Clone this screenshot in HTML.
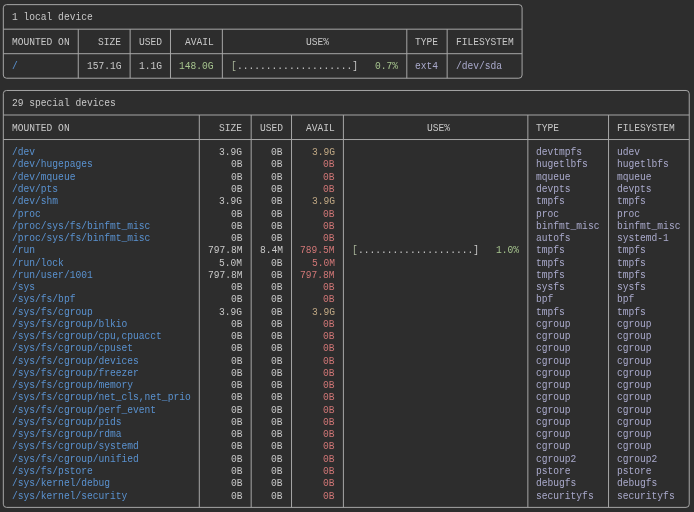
<!DOCTYPE html>
<html><head><meta charset="utf-8"><style>
html,body{margin:0;padding:0;background:#2d2d2d;}
body{width:694px;height:512px;position:relative;overflow:hidden;}
svg{position:absolute;left:0;top:0;}
#t{position:absolute;left:0;top:0;width:694px;height:512px;will-change:transform;}
span{position:absolute;white-space:pre;font-family:"Liberation Mono",monospace;font-size:10.0px;line-height:12.262px;transform:scaleX(0.9605);transform-origin:0 0;}
</style></head><body>
<svg width="694" height="512" viewBox="0 0 694 512" fill="#a6a6a6" stroke="#a6a6a6">
<rect x="3.32" y="4.64" width="518.76" height="73.57" rx="3.2" fill="none" stroke-width="1.0"/>
<rect x="3.32" y="28.67" width="518.76" height="1.0" stroke="none"/>
<rect x="3.32" y="53.19" width="518.76" height="1.0" stroke="none"/>
<rect x="77.75" y="29.17" width="1.0" height="49.05" stroke="none"/>
<rect x="129.63" y="29.17" width="1.0" height="49.05" stroke="none"/>
<rect x="169.98" y="29.17" width="1.0" height="49.05" stroke="none"/>
<rect x="221.85" y="29.17" width="1.0" height="49.05" stroke="none"/>
<rect x="406.30" y="29.17" width="1.0" height="49.05" stroke="none"/>
<rect x="446.65" y="29.17" width="1.0" height="49.05" stroke="none"/>
<rect x="3.32" y="90.48" width="685.92" height="416.91" rx="3.2" fill="none" stroke-width="1.0"/>
<rect x="3.32" y="114.50" width="685.92" height="1.0" stroke="none"/>
<rect x="3.32" y="139.02" width="685.92" height="1.0" stroke="none"/>
<rect x="198.80" y="115.00" width="1.0" height="392.38" stroke="none"/>
<rect x="250.67" y="115.00" width="1.0" height="392.38" stroke="none"/>
<rect x="291.02" y="115.00" width="1.0" height="392.38" stroke="none"/>
<rect x="342.90" y="115.00" width="1.0" height="392.38" stroke="none"/>
<rect x="527.35" y="115.00" width="1.0" height="392.38" stroke="none"/>
<rect x="608.04" y="115.00" width="1.0" height="392.38" stroke="none"/>
</svg>
<div id="t">
<span style="left:11.97px;top:12.00px;color:#c8c8c8">1 local device</span>
<span style="left:11.97px;top:37.00px;color:#c8c8c8">MOUNTED ON</span>
<span style="left:98.43px;top:37.00px;color:#c8c8c8">SIZE</span>
<span style="left:138.78px;top:37.00px;color:#c8c8c8">USED</span>
<span style="left:184.89px;top:37.00px;color:#c8c8c8">AVAIL</span>
<span style="left:305.93px;top:37.00px;color:#c8c8c8">USE%</span>
<span style="left:415.45px;top:37.00px;color:#c8c8c8">TYPE</span>
<span style="left:455.80px;top:37.00px;color:#c8c8c8">FILESYSTEM</span>
<span style="left:11.97px;top:61.00px;color:#5a92d0">/</span>
<span style="left:86.90px;top:61.00px;color:#c8c8c8">157.1G</span>
<span style="left:138.78px;top:61.00px;color:#c8c8c8">1.1G</span>
<span style="left:179.12px;top:61.00px;color:#a6c48e">148.0G</span>
<span style="left:231.00px;top:61.00px;color:#a8b498">[</span>
<span style="left:236.76px;top:61.00px;color:#c8c8c8">....................]</span>
<span style="left:375.10px;top:61.00px;color:#a6c48e">0.7%</span>
<span style="left:415.45px;top:61.00px;color:#aaaacc">ext4</span>
<span style="left:455.80px;top:61.00px;color:#aaaacc">/dev/sda</span>
<span style="left:11.97px;top:98.00px;color:#c8c8c8">29 special devices</span>
<span style="left:11.97px;top:123.00px;color:#c8c8c8">MOUNTED ON</span>
<span style="left:219.47px;top:123.00px;color:#c8c8c8">SIZE</span>
<span style="left:259.82px;top:123.00px;color:#c8c8c8">USED</span>
<span style="left:305.93px;top:123.00px;color:#c8c8c8">AVAIL</span>
<span style="left:426.98px;top:123.00px;color:#c8c8c8">USE%</span>
<span style="left:536.49px;top:123.00px;color:#c8c8c8">TYPE</span>
<span style="left:617.19px;top:123.00px;color:#c8c8c8">FILESYSTEM</span>
<span style="left:11.97px;top:147.00px;color:#5a92d0">/dev</span>
<span style="left:219.47px;top:147.00px;color:#c8c8c8">3.9G</span>
<span style="left:271.35px;top:147.00px;color:#c8c8c8">0B</span>
<span style="left:311.70px;top:147.00px;color:#c0a884">3.9G</span>
<span style="left:536.49px;top:147.00px;color:#aaaacc">devtmpfs</span>
<span style="left:617.19px;top:147.00px;color:#aaaacc">udev</span>
<span style="left:11.97px;top:159.00px;color:#5a92d0">/dev/hugepages</span>
<span style="left:231.00px;top:159.00px;color:#c8c8c8">0B</span>
<span style="left:271.35px;top:159.00px;color:#c8c8c8">0B</span>
<span style="left:323.22px;top:159.00px;color:#d07676">0B</span>
<span style="left:536.49px;top:159.00px;color:#aaaacc">hugetlbfs</span>
<span style="left:617.19px;top:159.00px;color:#aaaacc">hugetlbfs</span>
<span style="left:11.97px;top:172.00px;color:#5a92d0">/dev/mqueue</span>
<span style="left:231.00px;top:172.00px;color:#c8c8c8">0B</span>
<span style="left:271.35px;top:172.00px;color:#c8c8c8">0B</span>
<span style="left:323.22px;top:172.00px;color:#d07676">0B</span>
<span style="left:536.49px;top:172.00px;color:#aaaacc">mqueue</span>
<span style="left:617.19px;top:172.00px;color:#aaaacc">mqueue</span>
<span style="left:11.97px;top:184.00px;color:#5a92d0">/dev/pts</span>
<span style="left:231.00px;top:184.00px;color:#c8c8c8">0B</span>
<span style="left:271.35px;top:184.00px;color:#c8c8c8">0B</span>
<span style="left:323.22px;top:184.00px;color:#d07676">0B</span>
<span style="left:536.49px;top:184.00px;color:#aaaacc">devpts</span>
<span style="left:617.19px;top:184.00px;color:#aaaacc">devpts</span>
<span style="left:11.97px;top:196.00px;color:#5a92d0">/dev/shm</span>
<span style="left:219.47px;top:196.00px;color:#c8c8c8">3.9G</span>
<span style="left:271.35px;top:196.00px;color:#c8c8c8">0B</span>
<span style="left:311.70px;top:196.00px;color:#c0a884">3.9G</span>
<span style="left:536.49px;top:196.00px;color:#aaaacc">tmpfs</span>
<span style="left:617.19px;top:196.00px;color:#aaaacc">tmpfs</span>
<span style="left:11.97px;top:209.00px;color:#5a92d0">/proc</span>
<span style="left:231.00px;top:209.00px;color:#c8c8c8">0B</span>
<span style="left:271.35px;top:209.00px;color:#c8c8c8">0B</span>
<span style="left:323.22px;top:209.00px;color:#d07676">0B</span>
<span style="left:536.49px;top:209.00px;color:#aaaacc">proc</span>
<span style="left:617.19px;top:209.00px;color:#aaaacc">proc</span>
<span style="left:11.97px;top:221.00px;color:#5a92d0">/proc/sys/fs/binfmt_misc</span>
<span style="left:231.00px;top:221.00px;color:#c8c8c8">0B</span>
<span style="left:271.35px;top:221.00px;color:#c8c8c8">0B</span>
<span style="left:323.22px;top:221.00px;color:#d07676">0B</span>
<span style="left:536.49px;top:221.00px;color:#aaaacc">binfmt_misc</span>
<span style="left:617.19px;top:221.00px;color:#aaaacc">binfmt_misc</span>
<span style="left:11.97px;top:233.00px;color:#5a92d0">/proc/sys/fs/binfmt_misc</span>
<span style="left:231.00px;top:233.00px;color:#c8c8c8">0B</span>
<span style="left:271.35px;top:233.00px;color:#c8c8c8">0B</span>
<span style="left:323.22px;top:233.00px;color:#d07676">0B</span>
<span style="left:536.49px;top:233.00px;color:#aaaacc">autofs</span>
<span style="left:617.19px;top:233.00px;color:#aaaacc">systemd-1</span>
<span style="left:11.97px;top:245.00px;color:#5a92d0">/run</span>
<span style="left:207.94px;top:245.00px;color:#c8c8c8">797.8M</span>
<span style="left:259.82px;top:245.00px;color:#c8c8c8">8.4M</span>
<span style="left:300.17px;top:245.00px;color:#d07676">789.5M</span>
<span style="left:352.04px;top:245.00px;color:#a8b498">[</span>
<span style="left:357.81px;top:245.00px;color:#c8c8c8">....................]</span>
<span style="left:496.14px;top:245.00px;color:#a6c48e">1.0%</span>
<span style="left:536.49px;top:245.00px;color:#aaaacc">tmpfs</span>
<span style="left:617.19px;top:245.00px;color:#aaaacc">tmpfs</span>
<span style="left:11.97px;top:258.00px;color:#5a92d0">/run/lock</span>
<span style="left:219.47px;top:258.00px;color:#c8c8c8">5.0M</span>
<span style="left:271.35px;top:258.00px;color:#c8c8c8">0B</span>
<span style="left:311.70px;top:258.00px;color:#d07676">5.0M</span>
<span style="left:536.49px;top:258.00px;color:#aaaacc">tmpfs</span>
<span style="left:617.19px;top:258.00px;color:#aaaacc">tmpfs</span>
<span style="left:11.97px;top:270.00px;color:#5a92d0">/run/user/1001</span>
<span style="left:207.94px;top:270.00px;color:#c8c8c8">797.8M</span>
<span style="left:271.35px;top:270.00px;color:#c8c8c8">0B</span>
<span style="left:300.17px;top:270.00px;color:#d07676">797.8M</span>
<span style="left:536.49px;top:270.00px;color:#aaaacc">tmpfs</span>
<span style="left:617.19px;top:270.00px;color:#aaaacc">tmpfs</span>
<span style="left:11.97px;top:282.00px;color:#5a92d0">/sys</span>
<span style="left:231.00px;top:282.00px;color:#c8c8c8">0B</span>
<span style="left:271.35px;top:282.00px;color:#c8c8c8">0B</span>
<span style="left:323.22px;top:282.00px;color:#d07676">0B</span>
<span style="left:536.49px;top:282.00px;color:#aaaacc">sysfs</span>
<span style="left:617.19px;top:282.00px;color:#aaaacc">sysfs</span>
<span style="left:11.97px;top:294.00px;color:#5a92d0">/sys/fs/bpf</span>
<span style="left:231.00px;top:294.00px;color:#c8c8c8">0B</span>
<span style="left:271.35px;top:294.00px;color:#c8c8c8">0B</span>
<span style="left:323.22px;top:294.00px;color:#d07676">0B</span>
<span style="left:536.49px;top:294.00px;color:#aaaacc">bpf</span>
<span style="left:617.19px;top:294.00px;color:#aaaacc">bpf</span>
<span style="left:11.97px;top:307.00px;color:#5a92d0">/sys/fs/cgroup</span>
<span style="left:219.47px;top:307.00px;color:#c8c8c8">3.9G</span>
<span style="left:271.35px;top:307.00px;color:#c8c8c8">0B</span>
<span style="left:311.70px;top:307.00px;color:#c0a884">3.9G</span>
<span style="left:536.49px;top:307.00px;color:#aaaacc">tmpfs</span>
<span style="left:617.19px;top:307.00px;color:#aaaacc">tmpfs</span>
<span style="left:11.97px;top:319.00px;color:#5a92d0">/sys/fs/cgroup/blkio</span>
<span style="left:231.00px;top:319.00px;color:#c8c8c8">0B</span>
<span style="left:271.35px;top:319.00px;color:#c8c8c8">0B</span>
<span style="left:323.22px;top:319.00px;color:#d07676">0B</span>
<span style="left:536.49px;top:319.00px;color:#aaaacc">cgroup</span>
<span style="left:617.19px;top:319.00px;color:#aaaacc">cgroup</span>
<span style="left:11.97px;top:331.00px;color:#5a92d0">/sys/fs/cgroup/cpu,cpuacct</span>
<span style="left:231.00px;top:331.00px;color:#c8c8c8">0B</span>
<span style="left:271.35px;top:331.00px;color:#c8c8c8">0B</span>
<span style="left:323.22px;top:331.00px;color:#d07676">0B</span>
<span style="left:536.49px;top:331.00px;color:#aaaacc">cgroup</span>
<span style="left:617.19px;top:331.00px;color:#aaaacc">cgroup</span>
<span style="left:11.97px;top:343.00px;color:#5a92d0">/sys/fs/cgroup/cpuset</span>
<span style="left:231.00px;top:343.00px;color:#c8c8c8">0B</span>
<span style="left:271.35px;top:343.00px;color:#c8c8c8">0B</span>
<span style="left:323.22px;top:343.00px;color:#d07676">0B</span>
<span style="left:536.49px;top:343.00px;color:#aaaacc">cgroup</span>
<span style="left:617.19px;top:343.00px;color:#aaaacc">cgroup</span>
<span style="left:11.97px;top:356.00px;color:#5a92d0">/sys/fs/cgroup/devices</span>
<span style="left:231.00px;top:356.00px;color:#c8c8c8">0B</span>
<span style="left:271.35px;top:356.00px;color:#c8c8c8">0B</span>
<span style="left:323.22px;top:356.00px;color:#d07676">0B</span>
<span style="left:536.49px;top:356.00px;color:#aaaacc">cgroup</span>
<span style="left:617.19px;top:356.00px;color:#aaaacc">cgroup</span>
<span style="left:11.97px;top:368.00px;color:#5a92d0">/sys/fs/cgroup/freezer</span>
<span style="left:231.00px;top:368.00px;color:#c8c8c8">0B</span>
<span style="left:271.35px;top:368.00px;color:#c8c8c8">0B</span>
<span style="left:323.22px;top:368.00px;color:#d07676">0B</span>
<span style="left:536.49px;top:368.00px;color:#aaaacc">cgroup</span>
<span style="left:617.19px;top:368.00px;color:#aaaacc">cgroup</span>
<span style="left:11.97px;top:380.00px;color:#5a92d0">/sys/fs/cgroup/memory</span>
<span style="left:231.00px;top:380.00px;color:#c8c8c8">0B</span>
<span style="left:271.35px;top:380.00px;color:#c8c8c8">0B</span>
<span style="left:323.22px;top:380.00px;color:#d07676">0B</span>
<span style="left:536.49px;top:380.00px;color:#aaaacc">cgroup</span>
<span style="left:617.19px;top:380.00px;color:#aaaacc">cgroup</span>
<span style="left:11.97px;top:392.00px;color:#5a92d0">/sys/fs/cgroup/net_cls,net_prio</span>
<span style="left:231.00px;top:392.00px;color:#c8c8c8">0B</span>
<span style="left:271.35px;top:392.00px;color:#c8c8c8">0B</span>
<span style="left:323.22px;top:392.00px;color:#d07676">0B</span>
<span style="left:536.49px;top:392.00px;color:#aaaacc">cgroup</span>
<span style="left:617.19px;top:392.00px;color:#aaaacc">cgroup</span>
<span style="left:11.97px;top:405.00px;color:#5a92d0">/sys/fs/cgroup/perf_event</span>
<span style="left:231.00px;top:405.00px;color:#c8c8c8">0B</span>
<span style="left:271.35px;top:405.00px;color:#c8c8c8">0B</span>
<span style="left:323.22px;top:405.00px;color:#d07676">0B</span>
<span style="left:536.49px;top:405.00px;color:#aaaacc">cgroup</span>
<span style="left:617.19px;top:405.00px;color:#aaaacc">cgroup</span>
<span style="left:11.97px;top:417.00px;color:#5a92d0">/sys/fs/cgroup/pids</span>
<span style="left:231.00px;top:417.00px;color:#c8c8c8">0B</span>
<span style="left:271.35px;top:417.00px;color:#c8c8c8">0B</span>
<span style="left:323.22px;top:417.00px;color:#d07676">0B</span>
<span style="left:536.49px;top:417.00px;color:#aaaacc">cgroup</span>
<span style="left:617.19px;top:417.00px;color:#aaaacc">cgroup</span>
<span style="left:11.97px;top:429.00px;color:#5a92d0">/sys/fs/cgroup/rdma</span>
<span style="left:231.00px;top:429.00px;color:#c8c8c8">0B</span>
<span style="left:271.35px;top:429.00px;color:#c8c8c8">0B</span>
<span style="left:323.22px;top:429.00px;color:#d07676">0B</span>
<span style="left:536.49px;top:429.00px;color:#aaaacc">cgroup</span>
<span style="left:617.19px;top:429.00px;color:#aaaacc">cgroup</span>
<span style="left:11.97px;top:441.00px;color:#5a92d0">/sys/fs/cgroup/systemd</span>
<span style="left:231.00px;top:441.00px;color:#c8c8c8">0B</span>
<span style="left:271.35px;top:441.00px;color:#c8c8c8">0B</span>
<span style="left:323.22px;top:441.00px;color:#d07676">0B</span>
<span style="left:536.49px;top:441.00px;color:#aaaacc">cgroup</span>
<span style="left:617.19px;top:441.00px;color:#aaaacc">cgroup</span>
<span style="left:11.97px;top:454.00px;color:#5a92d0">/sys/fs/cgroup/unified</span>
<span style="left:231.00px;top:454.00px;color:#c8c8c8">0B</span>
<span style="left:271.35px;top:454.00px;color:#c8c8c8">0B</span>
<span style="left:323.22px;top:454.00px;color:#d07676">0B</span>
<span style="left:536.49px;top:454.00px;color:#aaaacc">cgroup2</span>
<span style="left:617.19px;top:454.00px;color:#aaaacc">cgroup2</span>
<span style="left:11.97px;top:466.00px;color:#5a92d0">/sys/fs/pstore</span>
<span style="left:231.00px;top:466.00px;color:#c8c8c8">0B</span>
<span style="left:271.35px;top:466.00px;color:#c8c8c8">0B</span>
<span style="left:323.22px;top:466.00px;color:#d07676">0B</span>
<span style="left:536.49px;top:466.00px;color:#aaaacc">pstore</span>
<span style="left:617.19px;top:466.00px;color:#aaaacc">pstore</span>
<span style="left:11.97px;top:478.00px;color:#5a92d0">/sys/kernel/debug</span>
<span style="left:231.00px;top:478.00px;color:#c8c8c8">0B</span>
<span style="left:271.35px;top:478.00px;color:#c8c8c8">0B</span>
<span style="left:323.22px;top:478.00px;color:#d07676">0B</span>
<span style="left:536.49px;top:478.00px;color:#aaaacc">debugfs</span>
<span style="left:617.19px;top:478.00px;color:#aaaacc">debugfs</span>
<span style="left:11.97px;top:491.00px;color:#5a92d0">/sys/kernel/security</span>
<span style="left:231.00px;top:491.00px;color:#c8c8c8">0B</span>
<span style="left:271.35px;top:491.00px;color:#c8c8c8">0B</span>
<span style="left:323.22px;top:491.00px;color:#d07676">0B</span>
<span style="left:536.49px;top:491.00px;color:#aaaacc">securityfs</span>
<span style="left:617.19px;top:491.00px;color:#aaaacc">securityfs</span>
</div>
</body></html>
